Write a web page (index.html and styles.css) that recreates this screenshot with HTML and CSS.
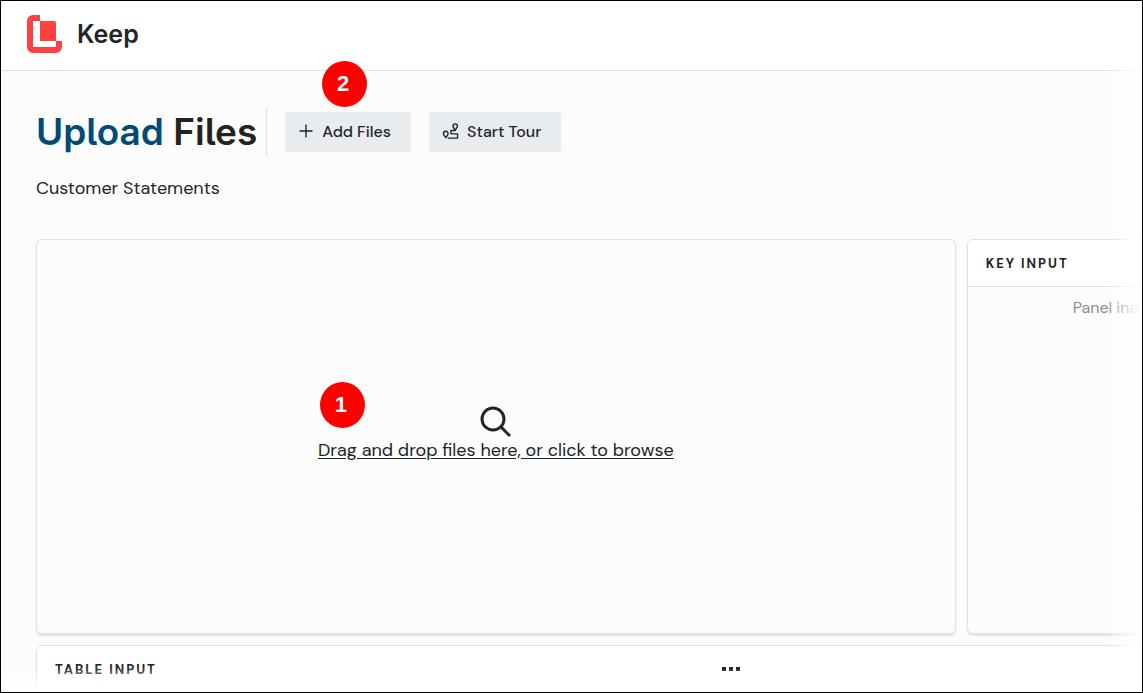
FILE: index.html
```
<!DOCTYPE html>
<html lang="en">
<head>
    <meta charset="UTF-8">
    <meta name="viewport" content="width=device-width, initial-scale=1.0">
    <title>Keep - Upload Files</title>
    <link rel="stylesheet" href="styles.css">
</head>
<body>
    <div class="app">
        <header class="topbar">
            <svg class="logo" viewBox="0 0 35 38" aria-hidden="true">
                <path fill="#ff4144" d="M6 0h7v6H6v26h23v-6h6v6a6 6 0 0 1-6 6H6a6 6 0 0 1-6-6V6a6 6 0 0 1 6-6z"/>
                <path fill="#ff4144" d="M13 6h14a2 2 0 0 1 2 2v18H13z"/>
            </svg>
            <span class="brand">Keep</span>
        </header>

        <main>
            <div class="title-row">
                <h1><span>Upload</span> Files</h1>
                <div class="actions">
                    <div class="action">
                        <button type="button" class="btn">
                            <svg width="16" height="16" viewBox="0 0 16 16" fill="none" stroke="currentColor" stroke-width="1.4" aria-hidden="true"><path d="M8 1.500v13M1.500 8h13"/></svg>
                            Add Files
                        </button>
                        <span class="badge badge-add">2</span>
                    </div>
                    <button type="button" class="btn">
                        <svg width="17" height="17" viewBox="0 0 18 18" fill="none" stroke="currentColor" stroke-width="1.5" stroke-linejoin="round" stroke-linecap="round" aria-hidden="true">
                            <path d="M14 7.500c-1.400-1.700-2.400-2.800-2.400-4.200a2.400 2.400 0 0 1 4.800 0C16.400 4.700 15.400 5.800 14 7.500z"/>
                            <path d="M4 15.500c-1.500-1.700-2.500-2.900-2.500-4.300a2.500 2.500 0 0 1 5 0c0 1.400-1 2.600-2.500 4.300z"/>
                            <path d="M14 8H9.500v3.500h7v4.500H6.500"/>
                        </svg>
                        Start Tour
                    </button>
                </div>
            </div>
            <p class="subtitle">Customer Statements</p>

            <div class="panels">
                <section class="panel drop-zone">
                    <button type="button" class="browse">
                        <svg width="32" height="32" viewBox="0 0 32 32" fill="none" stroke="currentColor" stroke-width="3" aria-hidden="true">
                            <circle cx="13" cy="13" r="11"/>
                            <path d="M21 21l9 9"/>
                        </svg>
                        <span>Drag and drop files here, or click to browse</span>
                    </button>
                    <span class="badge badge-drop">1</span>
                </section>
                <section class="panel">
                    <h2 class="panel-head">Key Input</h2>
                    <p class="panel-note">Panel inac</p>
                </section>
                <section class="panel table-panel">
                    <div class="panel-head">
                        <h2>Table Input</h2>
                        <button type="button" class="more" aria-label="More options">
                            <svg width="18" height="4" viewBox="0 0 18 4" fill="currentColor" aria-hidden="true"><path d="M0 0h4v4H0zM7 0h4v4H7zM14 0h4v4h-4z"/></svg>
                        </button>
                        <span></span>
                    </div>
                </section>
            </div>
        </main>
    </div>
</body>
</html>
```

FILE: styles.css
```
:root {
    --text: #212529;
    --line: #dee2e6;
    --page: #fcfcfc;
    --badge: #ff0000;
}

* {
    box-sizing: border-box;
}

body {
    margin: 0;
    font-family: "DM Sans", Inter, sans-serif;
    color: var(--text);
}

button {
    border: none;
    font: inherit;
    color: inherit;
    cursor: pointer;
}

h1, h2, p {
    margin: 0;
}

.app {
    position: relative;
    height: 100vh;
    overflow: hidden;
    border: 1px solid #000;
    background: var(--page);
}

/* fade the content out towards the right and bottom edges */
.app::after {
    content: "";
    position: absolute;
    inset: 0;
    pointer-events: none;
    background:
        linear-gradient(to left, #fff 2px, transparent 36px),
        linear-gradient(to top, #fff 4px, transparent 24px);
}

.topbar {
    display: flex;
    align-items: center;
    gap: 15px;
    height: 70px;
    padding: 0 26px 4px;
    background: #fff;
    border-bottom: 1px solid var(--line);
}

.logo {
    width: 35px;
    height: 38px;
}

.brand {
    font-family: Inter, sans-serif;
    font-size: 25px;
    font-weight: 600;
}

main {
    padding: 36px 0 0 35px;
}

.title-row {
    display: flex;
    align-items: center;
}

h1 {
    height: 50px;
    padding-right: 9px;
    border-right: 1px solid var(--line);
    color: #222;
    font-family: Inter, sans-serif;
    font-feature-settings: "cv05";
    font-size: 37px;
    font-weight: 600;
    line-height: 50px;
    white-space: nowrap;
}

h1 span {
    color: #004a77;
}

.actions {
    display: flex;
    gap: 18px;
    margin-left: 18px;
}

.action {
    position: relative;
}

.btn {
    display: flex;
    align-items: center;
    gap: 8px;
    height: 40px;
    padding: 0 20px 2px 13px;
    border-radius: 4px;
    background: #e9ecef;
    font-size: 16px;
    font-weight: 500;
    white-space: nowrap;
}

.badge {
    position: absolute;
    display: flex;
    align-items: center;
    justify-content: center;
    width: 45px;
    height: 46px;
    padding-right: 3px;
    border-radius: 50%;
    background: var(--badge);
    color: #fff;
    font-family: "Liberation Sans", sans-serif;
    font-size: 22px;
    font-weight: 700;
}

.badge-add {
    top: -51px;
    left: 37px;
}

.subtitle {
    margin-top: 18px;
    font-size: 18px;
    line-height: 26px;
}

/* wider than the window, the right column runs off screen */
.panels {
    display: grid;
    grid-template-columns: 2fr 1fr;
    gap: 11px;
    width: calc(125% + 8px);
    margin-top: 38px;
}

.panel {
    border: 1px solid var(--line);
    border-radius: 6px;
    background: var(--page);
    box-shadow: 0 2px 2px rgba(0, 0, 0, 0.1);
    overflow: hidden;
}

.drop-zone {
    position: relative;
    display: flex;
    align-items: center;
    justify-content: center;
    min-height: 395px;
}

.browse {
    display: flex;
    flex-direction: column;
    align-items: center;
    padding: 0 0 6px;
    background: none;
    font-size: 18px;
    line-height: 24px;
    text-decoration: underline;
    text-underline-offset: 2px;
}

.badge-drop {
    top: 142px;
    left: calc(50% - 176px);
}

.panel-head {
    display: flex;
    align-items: center;
    height: 47px;
    padding: 0 18px;
    background: #fff;
    border-bottom: 1px solid var(--line);
}

.panel-head,
.panel-head h2 {
    font-size: 13px;
    font-weight: 700;
    letter-spacing: 2px;
    text-transform: uppercase;
}

.panel-note {
    padding: 8px 0 0 105px;
    color: #868e96;
    font-size: 16px;
    line-height: 26px;
}

.table-panel {
    grid-column: 1 / -1;
}

.table-panel .panel-head {
    display: grid;
    grid-template-columns: 1fr auto 1fr;
}

.more {
    display: flex;
    padding: 4px 0;
    background: none;
}
```
